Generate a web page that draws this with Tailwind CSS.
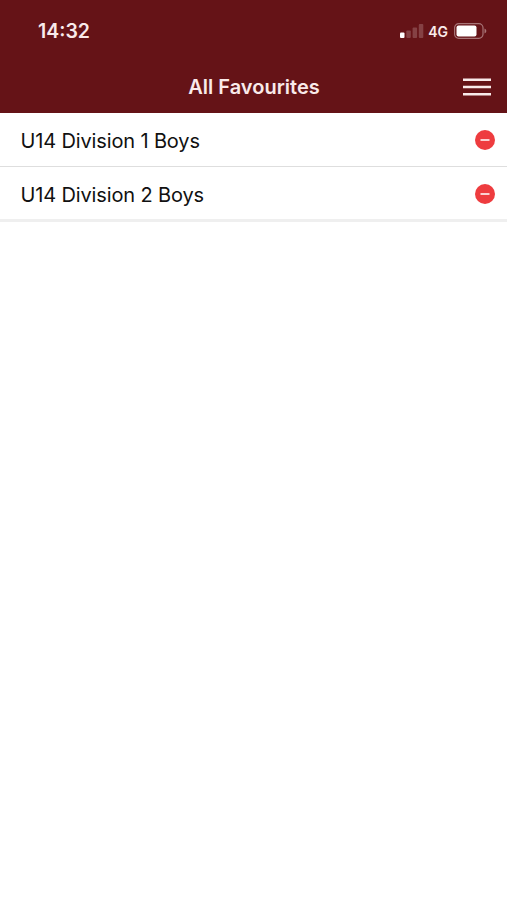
<!DOCTYPE html>
<html lang="en">
<head>
    <meta charset="UTF-8">
    <meta name="viewport" content="width=device-width, initial-scale=1.0">
    <title>All Favourites</title>
    <script src="https://cdn.jsdelivr.net/npm/@tailwindcss/browser@4"></script>
</head>
<body class="bg-white font-['Inter',sans-serif]">
    <div class="h-[900px] overflow-hidden">
        <header class="h-[113px] bg-[#651317] text-[#f9eaea]">
            <!-- Status bar -->
            <div class="flex h-[62px] items-center justify-between pl-[38px] pr-[20px]">
                <span class="pt-[2px] text-[19.5px] font-semibold">14:32</span>
                <div class="flex items-center">
                    <svg class="h-[14px] w-[24px]" viewBox="0 0 24 14" fill="currentColor">
                        <rect x="0" y="8.5" width="4.5" height="5.5" rx="1" fill="#fff"/>
                        <rect x="6.3" y="6.5" width="4.5" height="7.5" rx="1" opacity=".22"/>
                        <rect x="12.6" y="3.5" width="4.5" height="10.5" rx="1" opacity=".22"/>
                        <rect x="18.8" y="0" width="4.5" height="14" rx="1" opacity=".22"/>
                    </svg>
                    <span class="ml-[4px] text-[14px] font-semibold">4G</span>
                    <svg class="ml-[6px] h-[16px] w-[33px]" viewBox="0 0 33 16" fill="none">
                        <rect x=".6" y=".6" width="28.4" height="14.8" rx="4.2" stroke="currentColor" stroke-width="1.2" opacity=".45"/>
                        <rect x="2.5" y="2.5" width="20" height="11" rx="2" fill="#fff"/>
                        <path d="M30.5 5.5v5c1.1-.5 1.8-1.4 1.8-2.5s-.7-2-1.8-2.5z" fill="currentColor" opacity=".45"/>
                    </svg>
                </div>
            </div>
            <!-- Title bar -->
            <div class="grid h-[50px] grid-cols-[1fr_auto_1fr] items-center pl-[15px] pr-[16px]">
                <h1 class="col-start-2 pl-[2px] text-[20px] font-semibold">All Favourites</h1>
                <button class="justify-self-end" aria-label="Menu">
                    <svg class="h-[20px] w-[28px]" viewBox="0 0 28 20" stroke="currentColor" stroke-width="2.5">
                        <path d="M0 2.7h28M0 10h28M0 17.3h28"/>
                    </svg>
                </button>
            </div>
        </header>

        <!-- Favourites -->
        <ul class="text-[20px] tracking-[-0.14px] text-[#111]">
            <li class="flex h-[54px] items-center justify-between border-b border-[#dedede] pl-[20.5px] pr-[12px]">
                <span class="pt-[2px]">U14 Division 1 Boys</span>
                <svg class="size-[20px]" viewBox="0 0 20 20"><circle cx="10" cy="10" r="10" fill="#ee3c3f"/><path d="M5.5 10h9" stroke="#fbdada" stroke-width="1.9"/></svg>
            </li>
            <li class="flex h-[55px] items-center justify-between border-b-3 border-[#efefef] pl-[20.5px] pr-[12px] pt-px">
                <span class="pt-[2px]">U14 Division 2 Boys</span>
                <svg class="size-[20px]" viewBox="0 0 20 20"><circle cx="10" cy="10" r="10" fill="#ee3c3f"/><path d="M5.5 10h9" stroke="#fbdada" stroke-width="1.9"/></svg>
            </li>
        </ul>
    </div>
</body>
</html>
